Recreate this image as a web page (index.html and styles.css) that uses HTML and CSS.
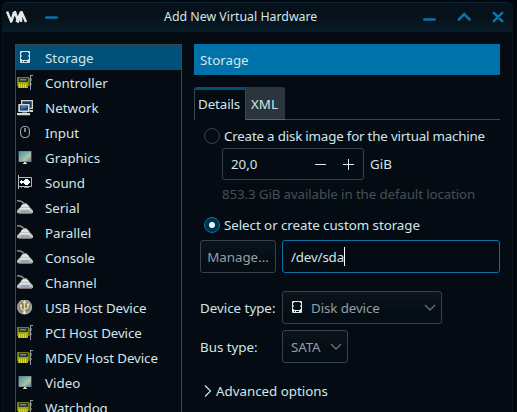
FILE: index.html
```
<!DOCTYPE html>
<html lang="en">
<head>
<meta charset="utf-8">
<title>Add New Virtual Hardware</title>
<link rel="stylesheet" href="styles.css">
</head>
<body>
<svg class="defs" width="0" height="0">
  <defs>
    <linearGradient id="screen" x1="0" y1="0" x2="1" y2="1"><stop offset="0" stop-color="#5f83b4"/><stop offset=".35" stop-color="#72b3a9"/><stop offset=".6" stop-color="#a5b08f"/><stop offset="1" stop-color="#5b91b8"/></linearGradient>
    <linearGradient id="metal" x1="0" y1="0" x2="0" y2="1"><stop offset="0" stop-color="#b5b5b0"/><stop offset=".6" stop-color="#f0f0ee"/><stop offset="1" stop-color="#a8a8a8"/></linearGradient>
    <radialGradient id="disc"><stop offset="0" stop-color="#77776a"/><stop offset=".75" stop-color="#8d8d88"/><stop offset="1" stop-color="#b9b9b6"/></radialGradient>
  </defs>
  <symbol id="disk" viewBox="0 0 16 16">
    <path fill="none" stroke="currentColor" d="M3.500 1.500h9v11h-9z"/>
    <path fill="currentColor" d="M4 2h1v1H4zM11 2h1v1h-1zM4 9h1v1H4zM11 9h1v1h-1zM4 10h8v1H4zM4 11h1v1H4zM6 11h1v1H6zM10 11h2v1h-2zM4 5h.6v2H4zM11.400 5h.6v2h-.6z"/>
  </symbol>
  <symbol id="card" viewBox="0 0 16 16">
    <path fill="#777b16" d="M0 2h12v9H0z"/>
    <path fill="#a8aa10" d="M1 8h10v5H1z"/>
    <path fill="#d8dc24" d="M2 9h1v4H2zM4 9h1v4H4zM6 9h1v4H6zM8 9h1v4H8z"/>
    <path fill="#263838" d="M2 3h9v4H2z"/>
    <path fill="#71898c" d="M3 4h6v1.500H3z"/>
    <path fill="#a4a810" d="M1 7h10v1H1z"/>
    <path fill="#969b9b" d="M13 0h3v1h-2v14h-1z"/>
    <path fill="#545b5b" d="M14 3h1v3h-1zM14 8h1v2h-1zM12 3h1v8h-1z"/>
  </symbol>
  <symbol id="network" viewBox="0 0 16 16">
    <path fill="#d1d2cb" d="M4 0h12v9H4zM6 10h10v2H6z"/>
    <path fill="#153868" d="M5.300 1.300h9.400v6.400H5.300z"/>
    <path fill="#555" d="M1 4h12v8H1z"/>
    <path fill="#d8d9d2" d="M1.500 4h11v8h-11zM0 13h13v2H0z"/>
    <path fill="#174483" d="M3 5.500h8v5H3z"/>
    <path fill="#4773ab" d="M4 6h6v1.500L4 9z"/>
    <path fill="#77796f" d="M5 12h5v1H5zM1 15h12v.6H1z"/>
  </symbol>
  <symbol id="mouse" viewBox="0 0 16 16">
    <rect x="3.600" y="1.500" width="8.800" height="11" rx="4" fill="none" stroke="#a0a5a8" stroke-width="1.100"/>
    <path stroke="#d6d9da" stroke-width="1.200" d="M8 3v4"/>
  </symbol>
  <symbol id="monitor" viewBox="0 0 16 16">
    <path fill="#687b83" d="M1.500 1h13v11h-13z"/>
    <path fill="url(#screen)" d="M2 1.500h12v10H2z"/>
    <path fill="#c9c9bf" opacity=".45" d="M5 11l4-6 5-2v4l-5 4z"/>
    <path fill="#d6dada" d="M7 12h2v1h1v1H6v-1h1z"/>
  </symbol>
  <symbol id="sound" viewBox="0 0 16 16">
    <path fill="none" stroke="#b5b9bd" d="M1.500 0v14M2 2.500h12.500v9H2"/>
    <path fill="#fff" d="M3 6h1V5h1v1h2V5h1V4h3v1h1v1h1v2h-1v1h-1v1H8V9H7V8H5v1H4V8H3z"/>
    <path fill="#9a9fa3" d="M4 12h1v1H4zM7 12h5v1H7z"/>
  </symbol>
  <symbol id="serial" viewBox="0 0 16 16">
    <path fill="none" stroke="#8d8d88" stroke-width="1.500" d="M0 .8c4-.2 6 1 8 4"/>
    <path fill="url(#metal)" d="M5 4.500l4-1.500 3 3 1 2H3z"/>
    <path fill="#c4c4c1" d="M3 7.500h10l3 3v2.200l-2 .8H2l-2-1v-2z"/>
    <path fill="#f5f5f3" d="M3 8.200h10v1H2.500z"/>
    <path fill="#7896b9" d="M4 10.500h8l.5 1.300h-9z"/>
    <path fill="#85857f" d="M1 12.500h14v1H2z"/>
  </symbol>
  <symbol id="usb" viewBox="0 0 16 16">
    <circle cx="7.600" cy="7" r="7.600" fill="url(#disc)"/>
    <path fill="none" stroke="#e9d98c" stroke-width="1.300" d="M7.500 13V2M7.500 11L4 8.500V5M7.500 9.500L11 7.500V4"/>
    <path fill="#f4e9ae" d="M7.500 0l2 3h-4zM3 4.500h2v2H3zM10 3.500h2v2h-2z"/>
    <circle cx="7.500" cy="12.500" r="1.500" fill="#f4e9ae"/>
  </symbol>
</svg>
<div class="window">
  <header class="titlebar">
    <svg class="logo" width="22" height="12" viewBox="0 0 22 12"><path fill="none" stroke="#e4e6e8" stroke-width="2.500" d="M1 .5l4 9.500L9 1l3 9 3.500-9 4.500 10M8 1L5.500 10.500M10.500 11l4.500-10v10"/></svg>
    <svg class="pin" width="13" height="3" viewBox="0 0 13 3"><path class="ctl" d="M1.300 1.500h10.400"/></svg>
    <h1 class="title">Add New Virtual Hardware</h1>
    <svg class="controls" width="82" height="14" viewBox="0 0 82 14"><path class="ctl" d="M2.300 9.500h10.400M36.800 9.500l5.400-5.400L47.600 9.500M71.800 2.800l8.400 8.400M80.200 2.800l-8.400 8.400"/></svg>
  </header>
  <main class="content">
    <ul class="hardware">
      <li class="item selected"><svg class="icon"><use href="#disk"/></svg>Storage</li>
      <li class="item"><svg class="icon"><use href="#card"/></svg>Controller</li>
      <li class="item"><svg class="icon"><use href="#network"/></svg>Network</li>
      <li class="item"><svg class="icon"><use href="#mouse"/></svg>Input</li>
      <li class="item"><svg class="icon"><use href="#monitor"/></svg>Graphics</li>
      <li class="item"><svg class="icon"><use href="#sound"/></svg>Sound</li>
      <li class="item"><svg class="icon"><use href="#serial"/></svg>Serial</li>
      <li class="item"><svg class="icon"><use href="#serial"/></svg>Parallel</li>
      <li class="item"><svg class="icon"><use href="#serial"/></svg>Console</li>
      <li class="item"><svg class="icon"><use href="#serial"/></svg>Channel</li>
      <li class="item tight"><svg class="icon"><use href="#usb"/></svg>USB Host Device</li>
      <li class="item tight"><svg class="icon"><use href="#card"/></svg>PCI Host Device</li>
      <li class="item tight"><svg class="icon"><use href="#card"/></svg>MDEV Host Device</li>
      <li class="item"><svg class="icon"><use href="#monitor"/></svg>Video</li>
      <li class="item tight"><svg class="icon"><use href="#card"/></svg>Watchdog</li>
    </ul>
    <section class="panel">
      <h2 class="heading">Storage</h2>
      <div class="tabs"><div class="tab active">Details</div><div class="tab">XML</div></div>
      <div class="form">
        <div class="option create"><span class="radio"></span>Create a disk image for the virtual machine</div>
        <div class="size">
          <div class="spin"><span class="value">20,0</span>
            <svg width="40" height="12" viewBox="0 0 40 12"><path stroke="#d8eef5" stroke-width="1" d="M0 6.500h11M28 6.500h11M33.500 1v11"/></svg>
          </div>GiB
        </div>
        <p class="hint">853.3 GiB available in the default location</p>
        <div class="option custom"><span class="radio checked"></span>Select or create custom storage</div>
        <div class="row path"><div class="button manage">Manage...</div><div class="entry">/dev/sda<span class="caret"></span></div></div>
        <div class="row device"><span class="label">Device type:</span><div class="button combo wide"><svg class="icon small"><use href="#disk"/></svg>Disk device<svg class="chevron" width="12" height="8" viewBox="0 0 12 8"><path d="M1 1l5 5 5-5"/></svg></div></div>
        <div class="row bus"><span class="label">Bus type:</span><div class="button combo narrow">SATA<svg class="chevron" width="12" height="8" viewBox="0 0 12 8"><path d="M1 1l5 5 5-5"/></svg></div></div>
        <div class="advanced"><svg width="8" height="12" viewBox="0 0 8 12"><path fill="none" stroke="#d8eef5" stroke-width="1.100" d="M1 .5L6.500 6 1 11.500"/></svg>Advanced options</div>
      </div>
    </section>
  </main>
</div>
</body>
</html>
```
FILE: styles.css
```
* { box-sizing: border-box; }
body {
  margin: 0;
  height: 412px;
  overflow: hidden;
  padding: 2px 4px 0 2px;
  background: #02070b;
  color: #d3e5ea;
  font: 13.333px/18px "Noto Sans", sans-serif;
}
.defs { position: absolute; }
h1, h2, p, ul { margin: 0; padding: 0; font-size: inherit; font-weight: normal; }
.window {
  height: 420px;
  border: 1px solid #061621;
  border-top: 0;
  border-radius: 5px 5px 0 0;
  background: #040b12;
}
.titlebar {
  display: flex;
  align-items: center;
  height: 30px;
  padding: 0 8px 0 3px;
  border-top: 1px solid #0b2536;
  border-radius: 5px 5px 0 0;
  background: linear-gradient(#07131c, #061019 40%, #071b27);
}
.logo { margin-top: -1px; }
.pin { margin: -1px 0 0 17px; }
.ctl { fill: none; stroke: #0873ad; stroke-width: 2.6; stroke-linecap: round; }
.title { margin: -1px 0 0 106px; font-size: 12.35px; }
.controls { margin: -1px 0 0 auto; }
.content { display: flex; gap: 12px; padding: 12px 0 0 12px; }
.hardware {
  width: 167px;
  height: 376px;
  overflow: hidden;
  list-style: none;
  border: 1px solid #3b464d;
}
.item { display: flex; align-items: center; height: 25px; padding: 1px 0 0 1px; }
.tight { letter-spacing: -0.1px; }
.selected { background: #005078; }
.icon { width: 16px; height: 16px; margin-right: 12px; flex: none; }
.panel { width: 306px; }
.heading { height: 31px; padding: 7px 6px 0; background: #0072aa; }
.tabs { display: flex; height: 33px; margin-top: 12px; border-bottom: 1px solid #3b464d; }
.tab {
  height: 33px;
  width: 39px;
  padding: 8px 0 0 5px;
  background: #2a353d;
  border-bottom: 1px solid #59656c;
  border-radius: 0 3px 0 0;
}
.tab.active {
  width: 52px;
  padding: 5px 0 0 3px;
  letter-spacing: -0.1px;
  border: 1px solid #3b464d;
  border-top: 3px solid #005078;
  border-bottom: 0;
  border-radius: 3px 0 0 0;
  background: #040b12;
}
.form { padding: 7px 0 0 6px; }
.option { display: flex; align-items: center; gap: 4px; height: 18px; padding-left: 4px; }
.create { letter-spacing: -0.19px; }
.radio { width: 16px; height: 16px; border: 1px solid #36434b; border-radius: 50%; }
.radio.checked { border-color: #0872a7; background: radial-gradient(circle, #dff1f7 0 2.7px, #00314a 3.4px); }
.size { display: flex; align-items: center; gap: 6px; margin: 3px 0 0 22px; }
.spin {
  display: flex;
  align-items: center;
  justify-content: space-between;
  width: 142px;
  height: 32px;
  padding: 0 8px;
  border: 1px solid #36434b;
  border-radius: 3px;
}
.hint { margin: 5px 0 0 22px; color: #454f56; letter-spacing: -0.12px; }
.custom { margin-top: 13px; letter-spacing: -0.05px; }
.row { display: flex; align-items: center; }
.path { margin-top: 6px; gap: 6px; }
.button, .entry { display: flex; align-items: center; height: 33px; border: 1px solid #36434b; border-radius: 3px; }
.button { color: #929fa5; background: linear-gradient(#0c141b, #050d14 70%); }
.manage { width: 76px; justify-content: center; }
.entry { width: 218px; padding-left: 8px; border-color: #0872a7; letter-spacing: -0.15px; }
.caret { width: 1px; height: 19px; background: #fff; }
.device { margin-top: 18px; }
.bus { margin-top: 6px; }
.label { width: 82px; }
.combo { padding: 0 5px 0 8px; letter-spacing: -0.1px; }
.wide { width: 160px; }
.narrow { width: 66px; }
.small { color: #e2ecf0; margin: 0 6px 0 -2px; }
.chevron { margin-left: auto; }
.chevron path { fill: none; stroke: #65727a; stroke-width: 1.3; }
.advanced { display: flex; align-items: center; gap: 4px; margin: 19px 0 0 4px; }
```
